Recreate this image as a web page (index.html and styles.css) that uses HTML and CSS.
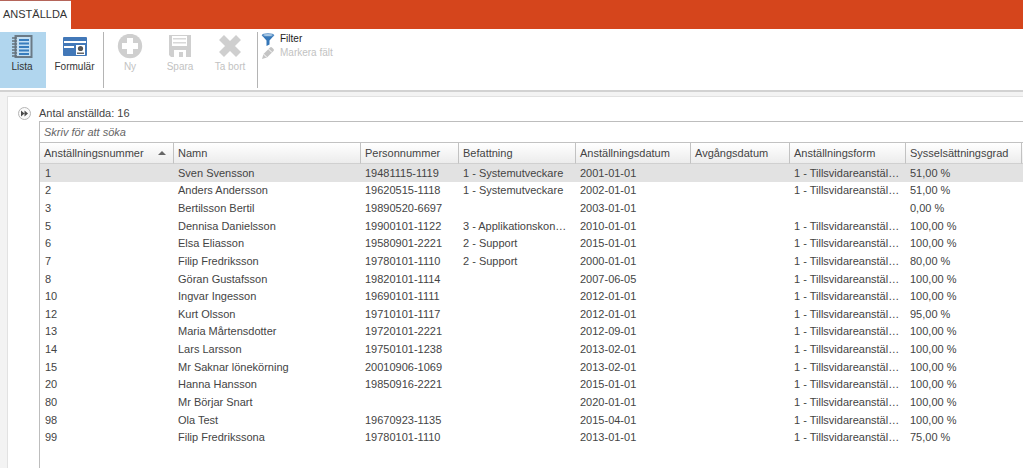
FILE: index.html
```html
<!DOCTYPE html>
<html lang="sv">
<head>
<meta charset="utf-8">
<title>Anställda</title>
<link rel="stylesheet" href="styles.css">
</head>
<body>
<header class="tabs"><button class="tab">ANSTÄLLDA</button></header>
<div class="ribbon">
  <div class="views">
    <button class="tool tool-list active">
      <svg width="22" height="26" viewBox="0 0 22 26"><rect x="4.500" y="2" width="16" height="21" fill="#c3dff3" stroke="#6b7a86" stroke-width="2"/><path d="M8 6h10M8 9.500h10M8 13h10M8 16.500h10M8 20h10" stroke="#397dbd" stroke-width="2"/><path d="M1 4h5M1 7h5M1 10h5M1 13h5M1 16h5M1 19h5M1 22h5" stroke="#66717b" stroke-width="1.300"/></svg>
      <span>Lista</span>
    </button>
    <button class="tool tool-form">
      <svg width="26" height="26" viewBox="0 0 26 26"><rect x="1" y="3" width="24" height="19" rx="1" fill="#4278b8"/><path d="M2 7h22v2H2zM2 12h10v2H2z" fill="#fff"/><rect x="14" y="11" width="9" height="10" fill="#fff"/><circle cx="18.500" cy="14.500" r="2.600" fill="#555"/><path d="M15 18.500h7v1.500h-7z" fill="#666"/></svg>
      <span>Formulär</span>
    </button>
  </div>
  <div class="actions">
    <button class="tool" disabled>
      <svg width="26" height="26" viewBox="0 0 26 26"><circle cx="13" cy="12" r="12.200" fill="#cfcfcf"/><path d="M10 4h6v5h5v6h-5v5h-6v-5H5V9h5z" fill="#fff"/></svg>
      <span>Ny</span>
    </button>
    <button class="tool" disabled>
      <svg width="24" height="26" viewBox="0 0 24 26"><path d="M1 1h22v22H3l-2-2z" fill="#cfcfcf"/><path d="M4 2h15v10H4zM6 16h12v7h-3v-5h-4v5H6z" fill="#fff"/><path d="M5 4h13v1.500H5zM5 8h13v1.500H5z" fill="#d8d8d8"/></svg>
      <span>Spara</span>
    </button>
    <button class="tool" disabled>
      <svg width="24" height="26" viewBox="0 0 24 26"><path d="M3.500 3.500l17 17M20.500 3.500l-17 17" stroke="#cfcfcf" stroke-width="7"/></svg>
      <span>Ta bort</span>
    </button>
  </div>
  <div class="filters">
    <button class="mini"><svg width="14" height="14" viewBox="0 0 14 14"><path d="M1 3.500L5.500 8.500V14l3-1.500v-4L13 3.500z" fill="#3476b8"/><ellipse cx="7" cy="3.200" rx="6.300" ry="2" fill="#528bc3"/><ellipse cx="7" cy="3" rx="4.500" ry="1" fill="#a9c8e4"/></svg><span>Filter</span></button>
    <button class="mini" disabled><svg width="14" height="14" viewBox="0 0 14 14"><path d="M1 13l1.500-5L9 1.500q1-1 2 0L12.500 3q1 1 0 2L6 11.500z" fill="#c4c4c4"/><path d="M2.500 8L6 11.500M7.500 3l3.500 3.500" stroke="#fff"/></svg><span>Markera fält</span></button>
  </div>
</div>
<main class="workspace">
  <section class="panel">
    <button class="expand" aria-label="Visa sidopanel"><svg width="13" height="13" viewBox="0 0 13 13"><circle cx="6.500" cy="6.500" r="6" fill="#fafafa" stroke="#b5b5b5"/><path d="M3 3.500L6.500 6.500 3 9.500zM6.500 3.500L10 6.500 6.500 9.500z" fill="#4a4a4a"/></svg></button>
    <div class="listing">
      <label class="count" for="search">Antal anställda: 16</label>
      <div class="grid">
        <input class="search" id="search" type="text" placeholder="Skriv för att söka">
        <table class="staff">
          <colgroup><col class="c-id"><col class="c-name"><col class="c-pnr"><col class="c-role"><col class="c-start"><col class="c-end"><col class="c-form"><col class="c-rate"><col></colgroup>
          <thead><tr><th><span class="sorted">Anställningsnummer<svg width="8" height="4" viewBox="0 0 8 4"><path d="M0 4L4 0l4 4z" fill="#666"/></svg></span></th><th>Namn</th><th>Personnummer</th><th>Befattning</th><th>Anställningsdatum</th><th>Avgångsdatum</th><th>Anställningsform</th><th>Sysselsättningsgrad</th><th></th></tr></thead>
          <tbody>
            <tr class="selected"><td>1</td><td>Sven Svensson</td><td>19481115-1119</td><td>1 - Systemutveckare</td><td>2001-01-01</td><td></td><td>1 - Tillsvidareanstäl…</td><td>51,00 %</td><td></td></tr>
            <tr><td>2</td><td>Anders Andersson</td><td>19620515-1118</td><td>1 - Systemutveckare</td><td>2002-01-01</td><td></td><td>1 - Tillsvidareanstäl…</td><td>51,00 %</td><td></td></tr>
            <tr><td>3</td><td>Bertilsson Bertil</td><td>19890520-6697</td><td></td><td>2003-01-01</td><td></td><td></td><td>0,00 %</td><td></td></tr>
            <tr><td>5</td><td>Dennisa Danielsson</td><td>19900101-1122</td><td>3 - Applikationskon…</td><td>2010-01-01</td><td></td><td>1 - Tillsvidareanstäl…</td><td>100,00 %</td><td></td></tr>
            <tr><td>6</td><td>Elsa Eliasson</td><td>19580901-2221</td><td>2 - Support</td><td>2015-01-01</td><td></td><td>1 - Tillsvidareanstäl…</td><td>100,00 %</td><td></td></tr>
            <tr><td>7</td><td>Filip Fredriksson</td><td>19780101-1110</td><td>2 - Support</td><td>2000-01-01</td><td></td><td>1 - Tillsvidareanstäl…</td><td>80,00 %</td><td></td></tr>
            <tr><td>8</td><td>Göran Gustafsson</td><td>19820101-1114</td><td></td><td>2007-06-05</td><td></td><td>1 - Tillsvidareanstäl…</td><td>100,00 %</td><td></td></tr>
            <tr><td>10</td><td>Ingvar Ingesson</td><td>19690101-1111</td><td></td><td>2012-01-01</td><td></td><td>1 - Tillsvidareanstäl…</td><td>100,00 %</td><td></td></tr>
            <tr><td>12</td><td>Kurt Olsson</td><td>19710101-1117</td><td></td><td>2012-01-01</td><td></td><td>1 - Tillsvidareanstäl…</td><td>95,00 %</td><td></td></tr>
            <tr><td>13</td><td>Maria Mårtensdotter</td><td>19720101-2221</td><td></td><td>2012-09-01</td><td></td><td>1 - Tillsvidareanstäl…</td><td>100,00 %</td><td></td></tr>
            <tr><td>14</td><td>Lars Larsson</td><td>19750101-1238</td><td></td><td>2013-02-01</td><td></td><td>1 - Tillsvidareanstäl…</td><td>100,00 %</td><td></td></tr>
            <tr><td>15</td><td>Mr Saknar lönekörning</td><td>20010906-1069</td><td></td><td>2013-02-01</td><td></td><td>1 - Tillsvidareanstäl…</td><td>100,00 %</td><td></td></tr>
            <tr><td>20</td><td>Hanna Hansson</td><td>19850916-2221</td><td></td><td>2015-01-01</td><td></td><td>1 - Tillsvidareanstäl…</td><td>100,00 %</td><td></td></tr>
            <tr><td>80</td><td>Mr Börjar Snart</td><td></td><td></td><td>2020-01-01</td><td></td><td>1 - Tillsvidareanstäl…</td><td>100,00 %</td><td></td></tr>
            <tr><td>98</td><td>Ola Test</td><td>19670923-1135</td><td></td><td>2015-04-01</td><td></td><td>1 - Tillsvidareanstäl…</td><td>100,00 %</td><td></td></tr>
            <tr><td>99</td><td>Filip Fredrikssona</td><td>19780101-1110</td><td></td><td>2013-01-01</td><td></td><td>1 - Tillsvidareanstäl…</td><td>75,00 %</td><td></td></tr>
          </tbody>
        </table>
      </div>
    </div>
  </section>
</main>
</body>
</html>
```
FILE: styles.css
```css
* { box-sizing: border-box; }
html { height: 100%; }
body {
  margin: 0;
  height: 100%;
  display: flex;
  flex-direction: column;
  overflow: hidden;
  background: #f3f3f3;
  color: #444;
  font: 11px/14px "Liberation Sans", Arial, sans-serif;
}
button, input {
  margin: 0;
  padding: 0;
  border: 0;
  background: none;
  color: inherit;
  font: inherit;
}
svg { display: block; flex: none; }

.tabs { flex: none; height: 29px; background: #d5451c; }
.tab { height: 29px; padding: 0 4px 2px 3px; border-top: 1px solid #b5655a; background: #fff; color: #333; }

.ribbon {
  flex: none;
  display: flex;
  height: 63px;
  padding: 3px 0 2px;
  background: #fff;
  border-bottom: 2px solid #d2d2d2;
}
.views { display: flex; }
.views, .actions { border-right: 1px solid #b4b4b4; }
.tool {
  display: flex;
  flex-direction: column;
  align-items: center;
  width: 50px;
  padding-top: 2px;
  font-size: 10px;
  color: #333;
}
.tool svg { height: 26px; }
.tool-list { width: 46px; padding-right: 2px; }
.tool-form { width: 57px; }
.active { background: #b1d6ee; }
.actions { display: flex; width: 154px; padding-left: 1px; }
.tool:disabled, .mini:disabled { color: #c2c2c2; }
.filters { display: flex; flex-direction: column; align-items: flex-start; padding: 0 3px; }
.mini { display: flex; align-items: center; gap: 5px; height: 14px; font-size: 10px; color: #222; }

.workspace { flex: 1; min-height: 0; display: flex; padding: 4px 0 0 7px; }
.panel {
  flex: 1;
  min-width: 0;
  display: flex;
  gap: 8px;
  padding: 9px 0 0 10px;
  border: 1px solid #e2e2e2;
  border-width: 1px 0 0 1px;
  background: #fff;
}
.expand { align-self: flex-start; padding-top: 1px; }
.listing { flex: 1; min-width: 0; display: flex; flex-direction: column; }
.count { height: 15px; }
.grid { flex: 1; min-height: 0; overflow: hidden; border: 1px solid #bdbdbd; border-width: 1px 0 0 1px; }
.search { display: block; width: 100%; height: 20px; padding: 0 4px; outline: 0; }
.search::placeholder { color: #666; font-style: italic; opacity: 1; }

.staff { width: 100%; height: 304px; border-collapse: separate; border-spacing: 0; table-layout: fixed; }
.c-id { width: 134px; }
.c-name { width: 187px; }
.c-pnr { width: 98px; }
.c-role { width: 117px; }
.c-start { width: 115px; }
.c-end { width: 99px; }
.c-form, .c-rate { width: 116px; }
.staff th, .staff td {
  padding: 0 3px 0 4px;
  overflow: hidden;
  text-align: left;
  font-weight: normal;
  white-space: nowrap;
  text-overflow: ellipsis;
}
.staff td:first-child { padding-left: 5px; }
.staff th {
  height: 22px;
  border: 1px solid #c2c2c2;
  border-left: 0;
  border-bottom-color: #d0d0d0;
  background: linear-gradient(#fff, #ececec);
}
.staff th:last-child, .staff td:last-child { padding: 0; border-right: 0; }
.sorted { display: flex; align-items: center; justify-content: space-between; padding-right: 4px; }
.selected { background: #e2e2e2; }
```
